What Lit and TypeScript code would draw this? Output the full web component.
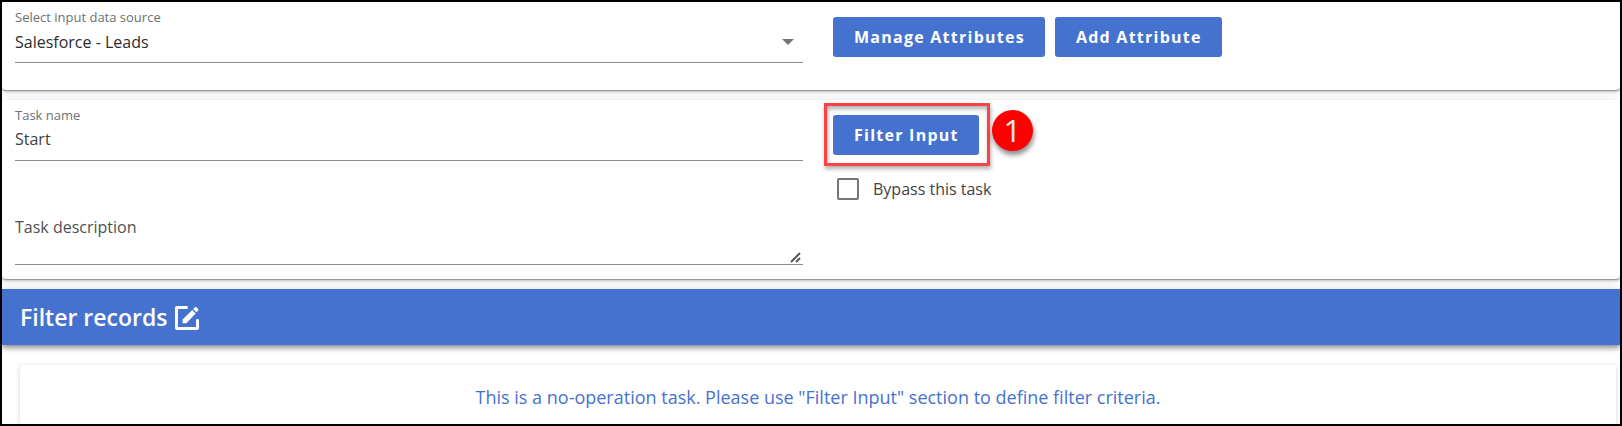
import { LitElement, html, css } from "lit";
import { customElement, state } from "lit/decorators.js";

@customElement("app-root")
export class AppRoot extends LitElement {
  static styles = css`
    :host {
      display: block;
      font-family: "Open Sans", "Noto Sans", sans-serif;
      font-size: 16px;
      color: #424242;
    }
    * {
      box-sizing: border-box;
    }
    .page {
      display: flex;
      flex-direction: column;
      min-height: 100vh;
      border: 2px solid #000;
      background: #fff;
      overflow: hidden;
    }
    .card {
      display: grid;
      grid-template-columns: 1fr 1fr;
      margin-bottom: 10px;
      border-radius: 4px;
      background: #fff;
      box-shadow: 0 1px 1px rgba(0, 0, 0, 0.3), 0 2px 3px rgba(0, 0, 0, 0.16),
        0 1px 8px rgba(0, 0, 0, 0.12);
    }
    .fields {
      display: flex;
      flex-direction: column;
      padding: 4px 8px 0 13px;
    }
    .source .fields {
      padding-bottom: 27px;
    }
    .task .fields {
      padding-bottom: 14px;
    }
    .actions {
      display: flex;
      gap: 10px;
      align-items: flex-start;
      padding: 15px 22px 0;
    }
    .stack {
      flex-direction: column;
      gap: 14px;
    }
    .field {
      display: flex;
      flex-direction: column;
      position: relative;
      border-bottom: 1px solid #8c8c8c;
    }
    .label {
      font-size: 13px;
      line-height: 22px;
      color: #6b7173;
    }
    .control {
      width: 100%;
      height: 26px;
      margin: 0 0 8px;
      padding: 0;
      border: 0;
      outline: 0;
      border-radius: 0;
      background: transparent;
      color: #424242;
      font: inherit;
      line-height: 26px;
      appearance: none;
    }
    .select {
      height: 28px;
      margin-bottom: 6px;
      color: #2c2c2c;
    }
    .area {
      display: block;
      height: 48px;
      margin: 0;
      line-height: 22px;
      resize: none;
      overflow: hidden;
    }
    .area::placeholder {
      color: #4f4f4f;
      opacity: 1;
    }
    .description {
      margin-top: 55px;
    }
    .arrow {
      position: absolute;
      right: 9px;
      bottom: 17px;
      width: 12px;
      height: 6px;
      fill: #757575;
      pointer-events: none;
    }
    .grip {
      position: absolute;
      right: 1px;
      bottom: 1px;
      width: 12px;
      height: 11px;
      stroke: #555;
      stroke-width: 2;
      pointer-events: none;
    }
    .button {
      height: 40px;
      padding: 0 20px 0 21px;
      border: 0;
      border-radius: 3px;
      background: #4672cf;
      color: #fff;
      font: inherit;
      font-weight: 700;
      letter-spacing: 1.25px;
      white-space: nowrap;
      cursor: pointer;
    }
    .marked {
      position: relative;
      display: flex;
    }
    .frame {
      position: absolute;
      inset: -12px -11px -11px -9px;
      border: 3px solid #fb4343;
      box-shadow: 1px 3px 4px rgba(0, 0, 0, 0.3),
        inset 1px 3px 4px rgba(0, 0, 0, 0.3);
      pointer-events: none;
    }
    .badge {
      position: absolute;
      left: calc(100% + 13px);
      top: -5px;
      width: 41px;
      height: 41px;
      border-radius: 50%;
      background: #fe0000;
      box-shadow: 1px 4px 5px rgba(0, 0, 0, 0.45);
      color: #e8e8e8;
      font-size: 31px;
      line-height: 40px;
      text-align: center;
    }
    .check {
      display: flex;
      align-items: center;
      gap: 14px;
      padding-left: 4px;
      line-height: 40px;
    }
    .box {
      appearance: none;
      width: 22px;
      height: 22px;
      margin: 0;
      border: 2px solid #757575;
      border-radius: 2px;
      background: #fff;
    }
    .box:checked {
      border-color: #4672cf;
      background: #4672cf;
    }
    .banner {
      display: flex;
      align-items: center;
      gap: 4px;
      height: 56px;
      flex: none;
      padding: 0 18px;
      background: #4672cf;
      color: #fff;
      box-shadow: 0 2px 4px -1px rgba(0, 0, 0, 0.3),
        0 4px 5px rgba(0, 0, 0, 0.2), 0 1px 10px rgba(0, 0, 0, 0.14);
    }
    .title {
      margin: 0;
      font-size: 23px;
      font-weight: 600;
      line-height: 32px;
    }
    .edit {
      display: flex;
      padding: 2px 0 0;
      border: 0;
      background: none;
      color: inherit;
    }
    .edit svg {
      width: 32px;
      height: 32px;
      fill: currentColor;
    }
    .message {
      flex: 1 0 auto;
      margin: 20px 4px 0 18px;
      padding: 16px;
      border-radius: 4px 4px 0 0;
      background: #fff;
      box-shadow: 0 1px 5px rgba(0, 0, 0, 0.18);
      color: #4672cf;
      font-size: 18px;
      line-height: 32px;
      height: 59px;
      text-align: center;
    }
  `;

  @state() private bypass = false;

  render() {
    return html`
      <main class="page">
        <section class="card source">
          <div class="fields">
            <div class="field">
              <label class="label" for="source">Select input data source</label>
              <select class="control select" id="source">
                <option>Salesforce - Leads</option>
              </select>
              <svg class="arrow" viewBox="0 0 12 6" aria-hidden="true">
                <path d="M0 0h12L6 6z" />
              </svg>
            </div>
          </div>
          <div class="actions">
            <button class="button" type="button">Manage Attributes</button>
            <button class="button" type="button">Add Attribute</button>
          </div>
        </section>

        <section class="card task">
          <div class="fields">
            <div class="field">
              <label class="label" for="name">Task name</label>
              <input class="control" id="name" type="text" value="Start" />
            </div>
            <div class="field description">
              <textarea
                class="control area"
                aria-label="Task description"
                placeholder="Task description"
              ></textarea>
              <svg class="grip" viewBox="0 0 12 11" aria-hidden="true">
                <path d="M1 10L10 1M6 10L10 6" />
              </svg>
            </div>
          </div>
          <div class="actions stack">
            <div class="marked">
              <button class="button" type="button">Filter Input</button>
              <span class="frame"></span>
              <span class="badge">1</span>
            </div>
            <label class="check">
              <input
                class="box"
                type="checkbox"
                .checked=${this.bypass}
                @change=${(e: Event) =>
                  (this.bypass = (e.target as HTMLInputElement).checked)}
              />
              Bypass this task
            </label>
          </div>
        </section>

        <header class="banner">
          <h2 class="title">Filter records</h2>
          <button class="edit" type="button" aria-label="Edit filter records">
            <svg viewBox="0 0 24 24" aria-hidden="true">
              <path
                d="M4.500 3C3.700 3 3 3.700 3 4.500v15c0 .8.700 1.500 1.500 1.500h15c.8 0 1.500-.7 1.500-1.500V13h-2.200v5.800H5.200V5.200h7.300V3zM18 3.900L16.600 5.300 19 7.700 20.400 6.300c.3-.3.300-.8 0-1.100L19.100 3.900c-.3-.3-.8-.3-1.100 0zM15.900 6L8.700 13.100V16h2.800L18.500 8.600z"
              />
            </svg>
          </button>
        </header>

        <section class="message">
          This is a no-operation task. Please use "Filter Input" section to
          define filter criteria.
        </section>
      </main>
    `;
  }
}
